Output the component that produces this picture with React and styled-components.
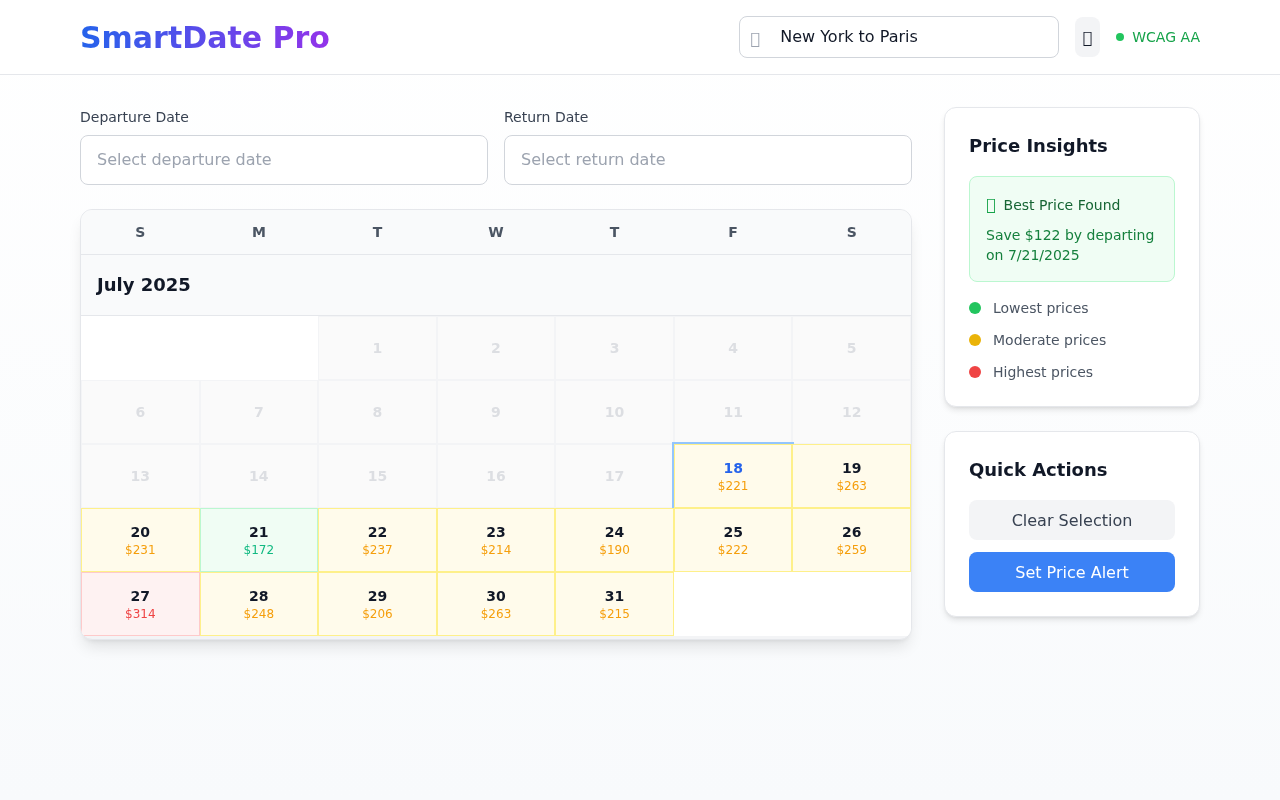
import React from "react";
import styled, { createGlobalStyle } from "styled-components";

const Global = createGlobalStyle`
  * { box-sizing: border-box; }
  html, body { margin: 0; padding: 0; }
  body {
    min-height: 100vh;
    font-family: "DejaVu Sans", sans-serif;
    color: #111827;
    background: linear-gradient(180deg, #ffffff 0%, #f8fafc 100%);
  }
`;

const Page = styled.div`
  min-height: 800px;
  will-change: transform;
`;
const Header = styled.header`
  height: 75px;
  background: #fff;
  border-bottom: 1px solid #e5e7eb;
  padding: 16px 80px;
  display: flex;
  align-items: center;
  justify-content: space-between;
`;
const Logo = styled.h1`
  margin: 2px 0 0;
  font-size: 30px;
  line-height: 36px;
  font-weight: 700;
  background: linear-gradient(90deg, #2563eb, #9333ea);
  -webkit-background-clip: text;
  background-clip: text;
  color: transparent;
`;
const HeaderRight = styled.div`
  display: flex;
  align-items: center;
  gap: 16px;
`;
const SearchBox = styled.div`
  position: relative;
  width: 320px;
  height: 42px;
  border: 1px solid #d1d5db;
  border-radius: 8px;
  background: #fff;
  display: flex;
  align-items: center;
  padding: 0 0 2px 40px;
  font-size: 16px;
  color: #111827;
`;
const SearchIcon = styled.span`
  position: absolute;
  left: 10px;
  top: 10px;
  font-size: 16px;
  line-height: 24px;
  color: #9ca3af;
`;
const ThemeButton = styled.button`
  width: 25px;
  height: 40px;
  border: 0;
  padding: 0 1px 0 0;
  border-radius: 8px;
  background: #f3f4f6;
  font: inherit;
  font-size: 16px;
  color: #111827;
`;
const Status = styled.div`
  display: flex;
  align-items: center;
  gap: 8px;
  font-size: 14px;
  line-height: 20px;
  color: #16a34a;
`;
const StatusDot = styled.span`
  width: 8px;
  height: 8px;
  border-radius: 50%;
  background: #22c55e;
`;
const Main = styled.main`
  display: grid;
  grid-template-columns: 832px 256px;
  gap: 32px;
  padding: 32px 80px;
`;
const DateRow = styled.div`
  display: grid;
  grid-template-columns: 1fr 1fr;
  gap: 16px;
  margin-bottom: 24px;
`;
const Field = styled.label`
  display: block;
`;
const FieldLabel = styled.span`
  display: block;
  font-size: 14px;
  line-height: 20px;
  color: #374151;
  margin-bottom: 8px;
`;
const DateInput = styled.input`
  display: block;
  width: 100%;
  height: 50px;
  padding: 0 16px 2px;
  border: 1px solid #d1d5db;
  border-radius: 8px;
  background: #fff;
  font: inherit;
  font-size: 16px;
  &::placeholder { color: #9ca3af; opacity: 1; }
`;
const Calendar = styled.section`
  background: #f3f4f6;
  border: 1px solid #e5e7eb;
  border-radius: 12px;
  overflow: hidden;
  box-shadow: 0 10px 15px -3px rgba(0,0,0,.1), 0 4px 6px -4px rgba(0,0,0,.1);
  padding-bottom: 3px;
`;
const Weekdays = styled.div`
  display: grid;
  grid-template-columns: repeat(7, 1fr);
  height: 45px;
  background: #f9fafb;
  border-bottom: 1px solid #e5e7eb;
`;
const Weekday = styled.div`
  display: flex;
  align-items: center;
  justify-content: center;
  font-size: 14px;
  font-weight: 600;
  color: #4b5563;
`;
const Month = styled.div`
  height: 61px;
  padding: 0 16px 2px;
  display: flex;
  align-items: center;
  background: #f9fafb;
  border-bottom: 1px solid #e5e7eb;
  font-size: 18px;
  font-weight: 600;
  color: #111827;
`;
const Days = styled.div`
  display: grid;
  grid-template-columns: repeat(7, 1fr);
  grid-auto-rows: 64px;
  background: #fff;
`;
const tones = {
  past: { bg: "#fafafa", border: "#f3f4f6", price: "#f59e0b" },
  medium: { bg: "#fffbeb", border: "#fef08a", price: "#f59e0b" },
  low: { bg: "#f0fdf4", border: "#bbf7d0", price: "#10b981" },
  high: { bg: "#fef2f2", border: "#fecaca", price: "#ef4444" },
};
const Day = styled.div`
  display: flex;
  flex-direction: column;
  align-items: center;
  justify-content: center;
  background: ${(p) => tones[p.$tone].bg};
  border: 1px solid ${(p) => tones[p.$tone].border};
  ${(p) => p.$today && "outline: 2px solid #93c5fd;"}
`;
const Blank = styled.div``;
const DayNum = styled.div`
  font-size: 14px;
  line-height: 20px;
  font-weight: 600;
  color: ${(p) => (p.$past ? "#dcdee2" : p.$today ? "#2563eb" : "#111827")};
`;
const Price = styled.div`
  font-size: 12px;
  line-height: 16px;
  color: ${(p) => tones[p.$tone].price};
`;
const Side = styled.aside`
  display: flex;
  flex-direction: column;
  gap: 24px;
`;
const Card = styled.section`
  background: #fff;
  border: 1px solid #e5e7eb;
  border-radius: 12px;
  padding: 24px;
  box-shadow: 0 4px 6px -1px rgba(0,0,0,.1), 0 2px 4px -2px rgba(0,0,0,.1);
`;
const CardTitle = styled.h3`
  margin: 0 0 16px;
  font-size: 18px;
  line-height: 28px;
  font-weight: 600;
  color: #111827;
`;
const Best = styled.div`
  background: #f0fdf4;
  border: 1px solid #bbf7d0;
  border-radius: 8px;
  padding: 16px;
  margin-bottom: 16px;
`;
const BestHead = styled.div`
  display: flex;
  align-items: center;
  gap: 8px;
  font-size: 14px;
  line-height: 20px;
  color: #166534;
  margin-bottom: 8px;
`;
const BestIcon = styled.span`
  color: #16a34a;
  font-size: 16px;
  line-height: 24px;
`;
const BestText = styled.p`
  margin: 0;
  font-size: 14px;
  line-height: 20px;
  color: #15803d;
`;
const Legend = styled.div`
  display: flex;
  flex-direction: column;
  gap: 12px;
`;
const LegendRow = styled.div`
  display: flex;
  align-items: center;
  gap: 12px;
  font-size: 14px;
  line-height: 20px;
  color: #4b5563;
`;
const LegendDot = styled.span`
  width: 12px;
  height: 12px;
  border-radius: 50%;
  background: ${(p) => p.$color};
`;
const Actions = styled.div`
  display: flex;
  flex-direction: column;
  gap: 12px;
`;
const ActionButton = styled.button`
  height: 40px;
  border: 0;
  border-radius: 8px;
  font: inherit;
  font-size: 16px;
  background: ${(p) => (p.$primary ? "#3b82f6" : "#f3f4f6")};
  color: ${(p) => (p.$primary ? "#ffffff" : "#374151")};
`;

const prices = { 18: 221, 19: 263, 20: 231, 21: 172, 22: 237, 23: 214, 24: 190, 25: 222, 26: 259, 27: 314, 28: 248, 29: 206, 30: 263, 31: 215 };
const toneOf = (d) => (d === 21 ? "low" : d === 27 ? "high" : "medium");
const days = Array.from({ length: 31 }, (_, i) => i + 1);
const MISSING = "\uE000";

export default function App() {
  return (
    <Page>
      <Global />
      <Header>
        <Logo>SmartDate Pro</Logo>
        <HeaderRight>
          <SearchBox>
            <SearchIcon>{MISSING}</SearchIcon>
            New York to Paris
          </SearchBox>
          <ThemeButton>{MISSING}</ThemeButton>
          <Status><StatusDot />WCAG AA</Status>
        </HeaderRight>
      </Header>
      <Main>
        <div>
          <DateRow>
            <Field>
              <FieldLabel>Departure Date</FieldLabel>
              <DateInput placeholder="Select departure date" />
            </Field>
            <Field>
              <FieldLabel>Return Date</FieldLabel>
              <DateInput placeholder="Select return date" />
            </Field>
          </DateRow>
          <Calendar>
            <Weekdays>
              {["S", "M", "T", "W", "T", "F", "S"].map((d, i) => <Weekday key={i}>{d}</Weekday>)}
            </Weekdays>
            <Month>July 2025</Month>
            <Days>
              <Blank />
              <Blank />
              {days.map((d) => {
                const past = d < 18;
                const tone = past ? "past" : toneOf(d);
                return (
                  <Day key={d} $tone={tone} $today={d === 18}>
                    <DayNum $past={past} $today={d === 18}>{d}</DayNum>
                    {!past && <Price $tone={tone}>${prices[d]}</Price>}
                  </Day>
                );
              })}
            </Days>
          </Calendar>
        </div>
        <Side>
          <Card>
            <CardTitle>Price Insights</CardTitle>
            <Best>
              <BestHead><BestIcon>{MISSING}</BestIcon>Best Price Found</BestHead>
              <BestText>Save $122 by departing on 7/21/2025</BestText>
            </Best>
            <Legend>
              <LegendRow><LegendDot $color="#22c55e" />Lowest prices</LegendRow>
              <LegendRow><LegendDot $color="#eab308" />Moderate prices</LegendRow>
              <LegendRow><LegendDot $color="#ef4444" />Highest prices</LegendRow>
            </Legend>
          </Card>
          <Card>
            <CardTitle>Quick Actions</CardTitle>
            <Actions>
              <ActionButton>Clear Selection</ActionButton>
              <ActionButton $primary>Set Price Alert</ActionButton>
            </Actions>
          </Card>
        </Side>
      </Main>
    </Page>
  );
}
